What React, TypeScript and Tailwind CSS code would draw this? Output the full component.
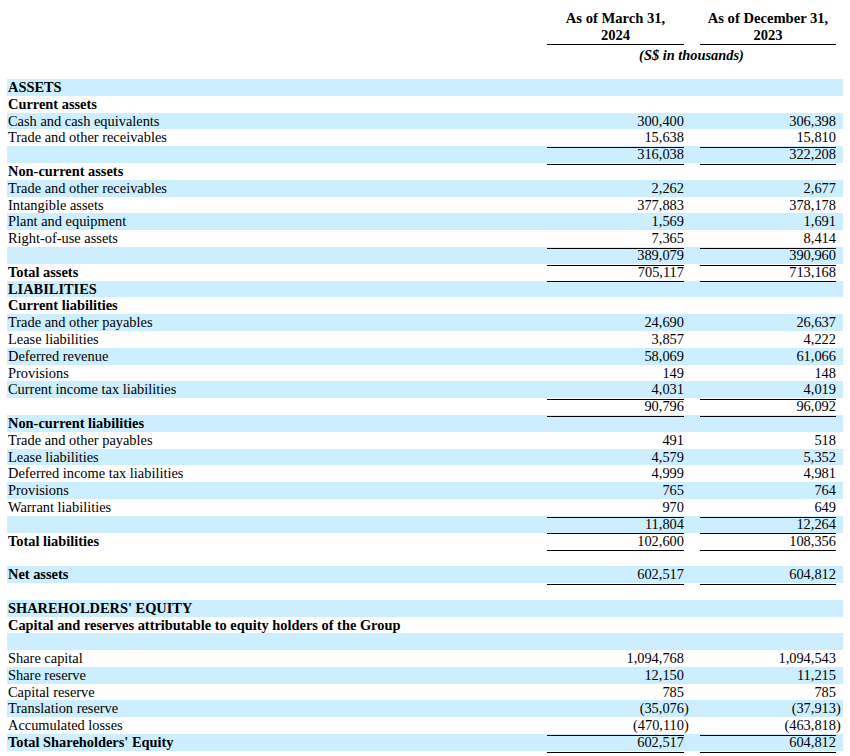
type Row = {
  label?: string;
  a?: string;
  b?: string;
  bold?: boolean;
  blue?: boolean;
  line?: boolean;
};

const rows: Row[] = [
  { label: "ASSETS", bold: true, blue: true },
  { label: "Current assets", bold: true },
  { label: "Cash and cash equivalents", a: "300,400", b: "306,398", blue: true },
  { label: "Trade and other receivables", a: "15,638", b: "15,810", line: true },
  { a: "316,038", b: "322,208", blue: true, line: true },
  { label: "Non-current assets", bold: true },
  { label: "Trade and other receivables", a: "2,262", b: "2,677", blue: true },
  { label: "Intangible assets", a: "377,883", b: "378,178" },
  { label: "Plant and equipment", a: "1,569", b: "1,691", blue: true },
  { label: "Right-of-use assets", a: "7,365", b: "8,414", line: true },
  { a: "389,079", b: "390,960", blue: true, line: true },
  { label: "Total assets", a: "705,117", b: "713,168", bold: true, line: true },
  { label: "LIABILITIES", bold: true, blue: true },
  { label: "Current liabilities", bold: true },
  { label: "Trade and other payables", a: "24,690", b: "26,637", blue: true },
  { label: "Lease liabilities", a: "3,857", b: "4,222" },
  { label: "Deferred revenue", a: "58,069", b: "61,066", blue: true },
  { label: "Provisions", a: "149", b: "148" },
  { label: "Current income tax liabilities", a: "4,031", b: "4,019", blue: true, line: true },
  { a: "90,796", b: "96,092", line: true },
  { label: "Non-current liabilities", bold: true, blue: true },
  { label: "Trade and other payables", a: "491", b: "518" },
  { label: "Lease liabilities", a: "4,579", b: "5,352", blue: true },
  { label: "Deferred income tax liabilities", a: "4,999", b: "4,981" },
  { label: "Provisions", a: "765", b: "764", blue: true },
  { label: "Warrant liabilities", a: "970", b: "649", line: true },
  { a: "11,804", b: "12,264", blue: true, line: true },
  { label: "Total liabilities", a: "102,600", b: "108,356", bold: true, line: true },
  {},
  { label: "Net assets", a: "602,517", b: "604,812", bold: true, blue: true, line: true },
  {},
  { label: "SHAREHOLDERS' EQUITY", bold: true, blue: true },
  { label: "Capital and reserves attributable to equity holders of the Group", bold: true },
  { blue: true },
  { label: "Share capital", a: "1,094,768", b: "1,094,543" },
  { label: "Share reserve", a: "12,150", b: "11,215", blue: true },
  { label: "Capital reserve", a: "785", b: "785" },
  { label: "Translation reserve", a: "(35,076)", b: "(37,913)", blue: true },
  { label: "Accumulated losses", a: "(470,110)", b: "(463,818)", line: true },
  { label: "Total Shareholders' Equity", a: "602,517", b: "604,812", bold: true, blue: true, line: true },
];

function Num({ v }: { v?: string }) {
  if (!v) return null;
  // closing parenthesis hangs past the column edge
  if (v.endsWith(")")) {
    return (
      <>
        {v.slice(0, -1)}
        <span className="inline-block w-0">)</span>
      </>
    );
  }
  return <>{v}</>;
}

export default function App() {
  return (
    <div className="min-h-screen bg-white px-[7px] font-['Liberation_Serif',serif] text-[14.4px] text-black">
      <div className="grid grid-cols-[540px_137px_16px_136px_8px] pt-[10px] text-[14.6px]">
        <div />
        <div className="border-b border-black text-center font-bold leading-[17px]">
          As of March 31,
          <br />
          2024
        </div>
        <div />
        <div className="border-b border-black text-center font-bold leading-[17px]">
          As of December 31,
          <br />
          2023
        </div>
        <div />
      </div>
      <div className="grid h-[34px] grid-cols-[540px_289px_8px] pt-[2px]">
        <div />
        <div className="text-center font-bold italic leading-[17px]">(S$ in thousands)</div>
        <div />
      </div>

      <div>
        {rows.map((r, i) => (
          <div
            key={i}
            className={`grid h-[16.8px] grid-cols-[540px_137px_16px_136px_8px] leading-[17.6px] ${
              r.blue ? "bg-[#cceeff]" : ""
            }`}
          >
            <div className={`whitespace-nowrap pl-px ${r.bold ? "font-bold" : ""}`}>{r.label}</div>
            <div className={`text-right ${r.line ? "border-b border-black" : ""}`}>
              <Num v={r.a} />
            </div>
            <div />
            <div className={`text-right ${r.line ? "border-b border-black" : ""}`}>
              <Num v={r.b} />
            </div>
            <div />
          </div>
        ))}
      </div>
    </div>
  );
}
